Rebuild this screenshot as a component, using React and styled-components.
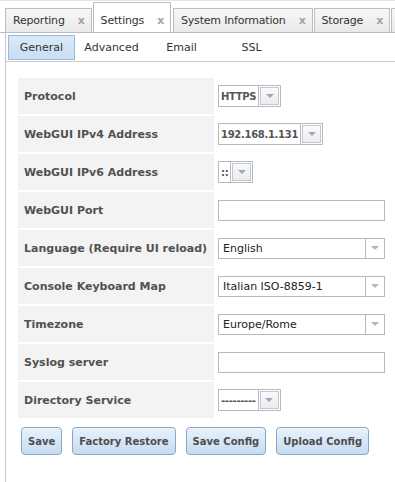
import styled, { createGlobalStyle } from 'styled-components'

const GlobalStyle = createGlobalStyle`
  html, body {
    margin: 0;
    padding: 0;
    background: #fff;
  }
  body {
    font-family: "DejaVu Sans", Verdana, sans-serif;
    font-size: 11px;
    color: #333;
  }
`

// Top tabs
const Page = styled.div`
  width: 395px;
  height: 482px;
  overflow: hidden;
  display: flex;
  flex-direction: column;
  border-top: 1px solid #e4e4e4;
  box-sizing: border-box;
`

const TabBar = styled.div`
  display: flex;
  align-items: flex-end;
  gap: 1px;
  height: 31px;
  padding-left: 5px;
  border-bottom: 1px solid #b9bec6;
  white-space: nowrap;
  overflow: hidden;
  flex-shrink: 0;
`

const Tab = styled.div`
  display: flex;
  align-items: flex-end;
  box-sizing: border-box;
  min-width: 24px;
  height: ${p => (p.$active ? '31px' : '25px')};
  margin-bottom: -1px;
  margin-right: ${p => (p.$active ? '1px' : '0')};
  padding: 0 6px 5px 7px;
  border: 1px solid #b9bec6;
  border-bottom-color: ${p => (p.$active ? '#fff' : '#b9bec6')};
  background: ${p => (p.$active ? '#fff' : 'linear-gradient(#f7f7f7, #e9e9e9)')};
  color: #333;
  font-size: 11px;
  letter-spacing: -0.2px;
  flex-shrink: 0;
`

const TabClose = styled.span`
  margin-left: 13px;
  font-weight: bold;
  color: #a3a3a3;
  font-size: 11px;
`

// Panel
const Panel = styled.div`
  flex: 1;
  margin-left: 5px;
  border-left: 1px solid #c6c6c6;
  display: flex;
  flex-direction: column;
`

const SubTabBar = styled.div`
  display: flex;
  gap: 3px;
  height: 29px;
  padding: 2px 0 0 2px;
  box-sizing: border-box;
  border-bottom: 1px solid #c9c9c9;
`

const SubTab = styled.div`
  width: 67px;
  height: 25px;
  box-sizing: border-box;
  display: flex;
  align-items: center;
  justify-content: center;
  font-size: 11px;
  color: #333;
  border: 1px solid ${p => (p.$active ? '#9dbbd9' : 'transparent')};
  background: ${p => (p.$active ? 'linear-gradient(#d9eaf9, #c9def3)' : 'transparent')};
`

const Content = styled.div`
  padding: 16px 0 0 12px;
`

const FormGrid = styled.div`
  display: grid;
  grid-template-columns: 196px 172px;
  grid-auto-rows: 36px;
  row-gap: 2px;
`

const Label = styled.div`
  display: flex;
  align-items: center;
  padding-left: 6px;
  background: #f3f3f3;
  font-weight: bold;
  color: #515151;
  font-size: 11px;
  white-space: nowrap;
`

const Value = styled.div`
  display: flex;
  align-items: center;
  padding-left: 4px;
`

const TextInput = styled.div`
  width: 167px;
  height: 21px;
  box-sizing: border-box;
  border: 1px solid #b5b9bf;
  background: #fff;
`

const SelectBox = styled.div`
  display: flex;
  box-sizing: border-box;
  height: ${p => (p.$wide ? '21px' : '22px')};
  width: ${p => (p.$wide ? '167px' : 'auto')};
  border: 1px solid #b5bac2;
  background: #fff;
`

const SelectText = styled.div`
  flex: 1;
  display: flex;
  align-items: center;
  padding: 0 ${p => (p.$bold ? '2px' : '4px')};
  font-weight: ${p => (p.$bold ? 'bold' : 'normal')};
  color: ${p => (p.$bold ? '#555' : '#222')};
  font-size: ${p => (p.$bold ? '10px' : '11px')};
  letter-spacing: ${p => (p.$bold ? '-0.3px' : '0')};
  white-space: nowrap;
`

const ArrowCell = styled.div`
  display: flex;
  align-items: center;
  justify-content: center;
  box-sizing: border-box;
  border-left: 1px solid #b5bac2;
  width: ${p => (p.$boxed ? '22px' : '19px')};
  padding: ${p => (p.$boxed ? '1px' : '0')};
`

const ArrowButton = styled.div`
  display: flex;
  align-items: center;
  justify-content: center;
  width: 100%;
  height: 100%;
  box-sizing: border-box;
  border: ${p => (p.$boxed ? '1px solid #c3c7cd' : 'none')};
  background: ${p => (p.$boxed ? 'linear-gradient(#fafafa, #ececec)' : 'transparent')};
`

const Arrow = styled.div`
  width: 0;
  height: 0;
  border-left: 4px solid transparent;
  border-right: 4px solid transparent;
  border-top: 4px solid ${p => (p.$boxed ? '#95a9cb' : '#b4b8be')};
`

const ButtonRow = styled.div`
  display: flex;
  gap: 10px;
  margin: 9px 0 0 3px;
`

const Button = styled.div`
  height: 28px;
  box-sizing: border-box;
  padding: 0 6px;
  display: flex;
  align-items: center;
  border: 1px solid #85a7c9;
  border-radius: 4px;
  background: linear-gradient(#e8f1fb, #c6dcf1);
  box-shadow: inset 0 1px 0 #f4f8fd;
  font-weight: bold;
  color: #4d4d4d;
  font-size: 10px;
  white-space: nowrap;
`

const Select = ({ value, wide, bold }) => (
  <SelectBox $wide={wide}>
    <SelectText $bold={bold}>{value}</SelectText>
    <ArrowCell $boxed={!wide}>
      <ArrowButton $boxed={!wide}>
        <Arrow $boxed={!wide} />
      </ArrowButton>
    </ArrowCell>
  </SelectBox>
)

const tabs = ['Reporting', 'Settings', 'System Information', 'Storage']
const subTabs = ['General', 'Advanced', 'Email', 'SSL']

const rows = [
  { label: 'Protocol', field: <Select value="HTTPS" bold /> },
  { label: 'WebGUI IPv4 Address', field: <Select value="192.168.1.131" bold /> },
  { label: 'WebGUI IPv6 Address', field: <Select value="::" bold /> },
  { label: 'WebGUI Port', field: <TextInput /> },
  { label: 'Language (Require UI reload)', field: <Select value="English" wide /> },
  { label: 'Console Keyboard Map', field: <Select value="Italian ISO-8859-1" wide /> },
  { label: 'Timezone', field: <Select value="Europe/Rome" wide /> },
  { label: 'Syslog server', field: <TextInput /> },
  { label: 'Directory Service', field: <Select value="---------" bold /> },
]

const buttons = ['Save', 'Factory Restore', 'Save Config', 'Upload Config']

const App = () => (
  <>
    <GlobalStyle />
    <Page>
      <TabBar>
        {tabs.map(t => (
          <Tab key={t} $active={t === 'Settings'}>
            {t}
            <TabClose>x</TabClose>
          </Tab>
        ))}
        {/* next tab, scrolled out of view */}
        <Tab />
      </TabBar>
      <Panel>
        <SubTabBar>
          {subTabs.map(s => (
            <SubTab key={s} $active={s === 'General'}>{s}</SubTab>
          ))}
        </SubTabBar>
        <Content>
          <FormGrid>
            {rows.map(r => [
              <Label key={r.label}>{r.label}</Label>,
              <Value key={r.label + '-v'}>{r.field}</Value>,
            ])}
          </FormGrid>
          <ButtonRow>
            {buttons.map(b => <Button key={b}>{b}</Button>)}
          </ButtonRow>
        </Content>
      </Panel>
    </Page>
  </>
)

export default App
